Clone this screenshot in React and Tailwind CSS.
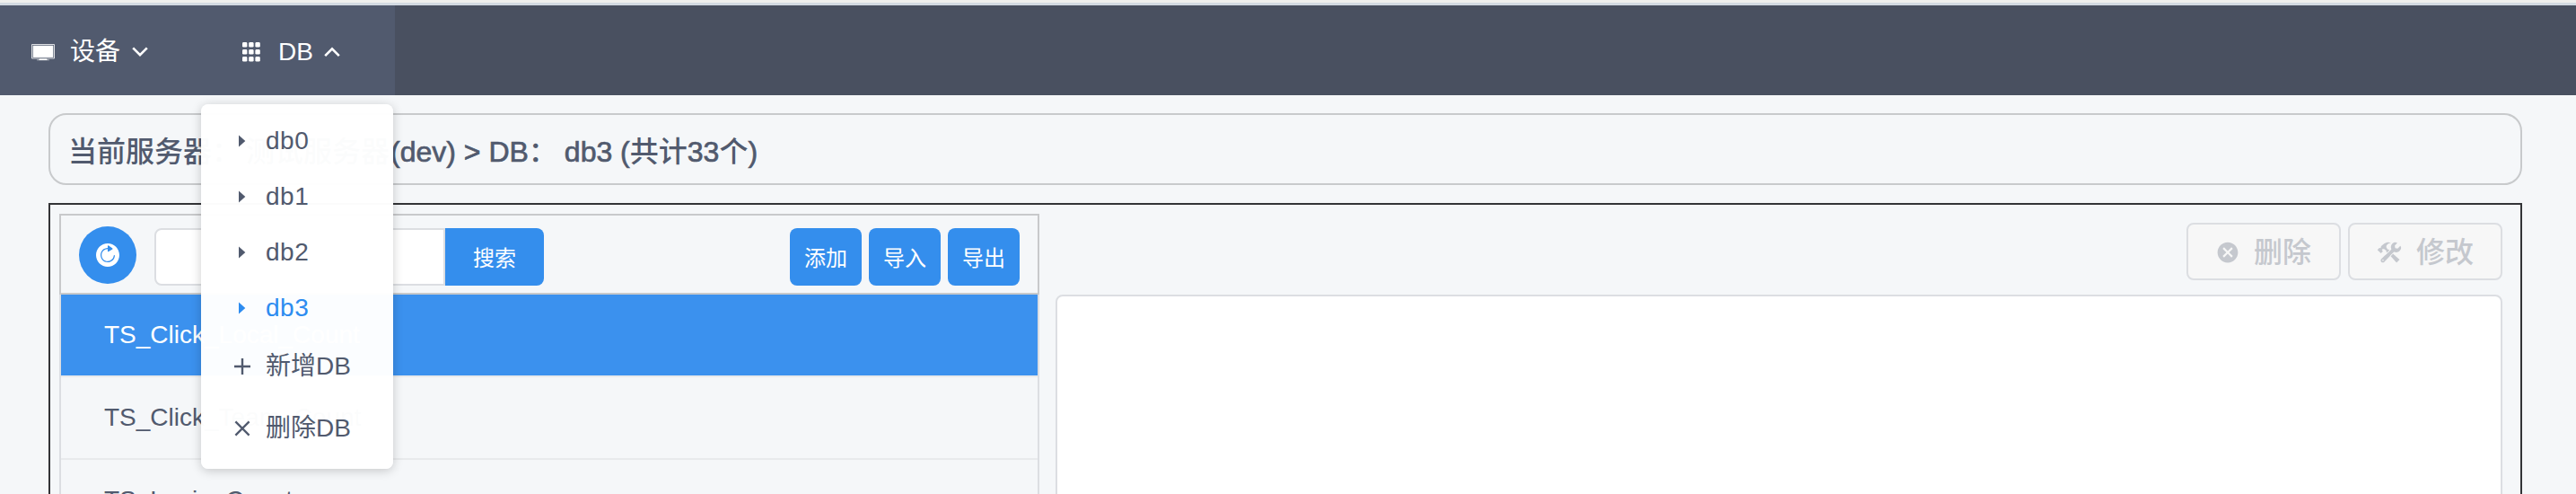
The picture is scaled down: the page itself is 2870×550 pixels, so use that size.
import { IoIosConstruct, IoIosRefreshCircle, IoMdCloseCircle } from "react-icons/io";

const keys = ["TS_Click_Local_Count", "TS_Click_Team_Count", "TS_Login_Count"];
const dbs = ["db0", "db1", "db2", "db3"];

function Chevron({ up }) {
  return (
    <svg className="h-3 w-[18px]" viewBox="0 0 18 12" fill="none" stroke="currentColor" strokeWidth="2.6">
      {up ? <path d="M1.2 10.2 9 2.4l7.8 7.8" /> : <path d="M1.2 1.4 9 9.2l7.8-7.8" />}
    </svg>
  );
}

function Desktop() {
  return (
    <svg className="mt-0.5 h-5 w-[26px]" viewBox="0 0 26 20" fill="none" stroke="currentColor">
      <path d="M.5.5h25v15.5H.5z" strokeOpacity=".8" />
      <path d="M1.700 1.700h22.600v13.200H1.700z" fill="currentColor" stroke="none" />
      <path d="M9 16.500h8l1 1.500H8z" fill="currentColor" stroke="none" />
      <path d="M6 17.800h14" strokeOpacity=".5" />
    </svg>
  );
}

function Keypad() {
  const steps = [0, 7.2, 14.4];
  return (
    <svg className="h-[22px] w-5" viewBox="0 0 20 22" fill="currentColor">
      {steps.map((x) =>
        steps.map((y) => <rect key={`${x}-${y}`} x={x} y={y * 1.11} width="5.4" height="5.6" rx="1.4" />)
      )}
    </svg>
  );
}

function DbMenu() {
  return (
    <div className="absolute top-[110px] left-0 z-10 h-[406px] w-[214px] rounded-lg bg-white/98 py-[10px] text-[#515a6e] shadow-[0_2px_12px_rgba(0,0,0,0.2)]">
      {dbs.map((db) => (
        <div key={db} className={`flex h-[62px] items-center ${db === "db3" ? "text-[#2d8cf0]" : ""}`}>
          <svg className="ml-[42px] h-[14px] w-[8px]" viewBox="0 0 8 14" fill="currentColor">
            <path d="M0 0.5 7.3 7 0 13.5z" />
          </svg>
          <span className="ml-[22px] tracking-[0.5px]">{db}</span>
        </div>
      ))}
      <div className="flex h-[68px] items-center">
        <svg className="ml-[37px] h-[18px] w-[18px]" viewBox="0 0 18 18" stroke="currentColor" strokeWidth="2.4">
          <path d="M0 9h18M9 0v18" />
        </svg>
        <span className="ml-[17px]">新增DB</span>
      </div>
      <div className="flex h-[70px] items-center">
        <svg className="ml-[37px] h-[18px] w-[18px]" viewBox="0 0 18 18" stroke="currentColor" strokeWidth="2.3">
          <path d="M1.4 1.4l15.2 15.2M16.600 1.400L1.400 16.600" />
        </svg>
        <span className="ml-[17px]">删除DB</span>
      </div>
    </div>
  );
}

function PrimaryButton({ children }) {
  return (
    <button className="flex h-16 w-20 items-center justify-center rounded-lg bg-[#348eed] pt-1 text-2xl text-white">
      {children}
    </button>
  );
}

export default function App() {
  return (
    <div className="flex h-[550px] w-[2870px] flex-col overflow-hidden bg-[#f5f7f9] font-['Liberation_Sans','Noto_Sans_CJK_SC',sans-serif] text-[28px] leading-none text-[#515a6e]">
      <div className="h-[3px] shrink-0 bg-[#efefed]" />
      <div className="h-[3px] shrink-0 bg-[#d3dae2]" />
      <nav className="flex h-[100px] shrink-0 bg-[#495060] text-white">
        <div className="flex w-[224px] items-center bg-[#515a6e] pt-1 pl-[35px]">
          <Desktop />
          <span className="ml-[17px]">设备</span>
          <span className="ml-[13px]"><Chevron /></span>
        </div>
        <div className="relative flex w-[216px] items-center bg-[#515a6e] pt-[3px] pl-[46px]">
          <Keypad />
          <span className="ml-[20px]">DB</span>
          <span className="ml-[12px]"><Chevron up /></span>
          <DbMenu />
        </div>
      </nav>
      <header className="mt-5 mr-[60px] ml-[54px] flex h-20 shrink-0 items-center rounded-[20px] border-2 border-[#c8cacc] pt-1.5 pl-[20px] text-[32px] font-medium">
        <span className="w-[198px] whitespace-nowrap">当前服务器：</span>
        <span className="w-[161px] whitespace-nowrap">测试服务器</span>
        <span className="whitespace-pre [-webkit-text-stroke:0.7px_#515a6e]">{"(dev) > DB"}</span>
        <span className="w-[40px]">：</span>
        <span className="whitespace-pre [-webkit-text-stroke:0.7px_#515a6e]">{"db3 ("}</span>
        <span>共计</span>
        <span className="[-webkit-text-stroke:0.7px_#515a6e]">33</span>
        <span>个</span>
        <span className="[-webkit-text-stroke:0.7px_#515a6e]">)</span>
      </header>
      <main className="mt-5 mr-[60px] ml-[54px] flex h-[400px] shrink-0 border-2 border-[#333437] pt-[10px] pl-[10px]">
        <section className="w-[1092px]">
          <div className="flex h-[90px] border-2 border-[#c8c9cb] pt-[14px] pl-5">
            <button className="-mt-0.5 flex size-16 items-center justify-center rounded-full bg-[#348eed] text-white">
              <IoIosRefreshCircle className="size-8" />
            </button>
            <div className="ml-5 h-16 w-[324px] rounded-l-lg border-2 border-[#dcdee2] bg-white" />
            <button className="flex h-16 w-[110px] items-center justify-center rounded-r-lg bg-[#348eed] pt-1 text-2xl text-white">
              搜索
            </button>
            <div className="ml-auto flex gap-2 pr-5">
              <PrimaryButton>添加</PrimaryButton>
              <PrimaryButton>导入</PrimaryButton>
              <PrimaryButton>导出</PrimaryButton>
            </div>
          </div>
          <ul className="border-x-2 border-[#dcdee2]">
            {keys.map((key, i) => (
              <li
                key={key}
                className={`flex h-[92px] items-center border-b-2 border-[#e8eaec] pl-12 ${i === 0 ? "bg-[#3b91ee] bg-clip-padding text-white" : ""}`}
              >
                {key}
              </li>
            ))}
          </ul>
        </section>
        <section className="ml-[18px] w-[1612px] pt-[10px]">
          <div className="flex h-16 justify-end gap-2 text-[32px] font-medium text-[#c5c8ce]">
            <button className="flex w-[172px] items-center rounded-lg border-2 border-[#dcdee2] bg-[#f7f7f7] pt-0.5 pl-[30px]">
              <IoMdCloseCircle className="size-7" />
              <span className="ml-[15px]">删除</span>
            </button>
            <button className="flex w-[172px] items-center rounded-lg border-2 border-[#dcdee2] bg-[#f7f7f7] pt-0.5 pl-[30px]">
              <IoIosConstruct className="size-7" />
              <span className="ml-4">修改</span>
            </button>
          </div>
          <div className="mt-4 h-[400px] rounded-lg border-2 border-[#dcdee2] bg-white" />
        </section>
      </main>
    </div>
  );
}
